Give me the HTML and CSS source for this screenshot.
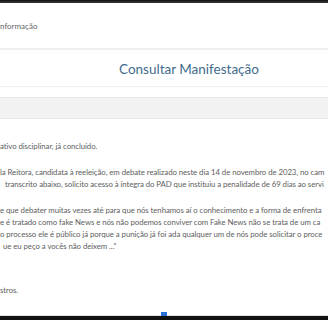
FILE: index.html
```html
<!DOCTYPE html>
<html>
    <head>
        <title>Consultar Manifestação</title>
        <meta charset="UTF-8">
        <link rel="stylesheet" href="styles.css">
    </head>
    <body>
        <div class="topbar"></div>
        <div class="header">
            <p class="brand">nformação</p>
        </div>
        <h1 class="title">Consultar Manifestação</h1>
        <div class="rule"></div>
        <div class="toolbar"></div>
        <div class="content">
            <p class="line">ativo disciplinar, já concluído.</p>
            <div class="para">
                <p class="line">la Reitora, candidata à reeleição, em debate realizado neste dia 14 de novembro de 2023, no cam</p>
                <p class="line in-5">transcrito abaixo, solicito acesso à íntegra do PAD que instituiu a penalidade de 69 dias ao servi</p>
            </div>
            <div class="para">
                <p class="line">e que debater muitas vezes até para que nós tenhamos aí o conhecimento e a forma de enfrenta</p>
                <p class="line">e é tratado como fake News e nós não podemos conviver com Fake News não se trata de um ca</p>
                <p class="line">o processo ele é público já porque a punição já foi ada qualquer um de nós pode solicitar o proce</p>
                <p class="line in-3">ue eu peço a vocês não deixem ..."</p>
            </div>
            <p class="line last">stros.</p>
        </div>
        <div class="footer">
            <span class="marker"></span>
        </div>
    </body>
</html>
```

FILE: styles.css
```css
html, body{
    margin: 0;
    padding: 0;
}

body{
    width: 328px;
    height: 320px;
    overflow: hidden;
    background: #fff;
    font-family: "Lato", "Open Sans", sans-serif;
    color: #555;
    display: flex;
    flex-direction: column;
}

.topbar{
    height: 3px;
    background: linear-gradient(#111, #3a3a3a);
}

.header{
    height: 45px;
    border-bottom: 2px solid #eeeeee;
    display: flex;
    align-items: center;
}

.brand{
    margin: 0;
    font-size: 8px;
    color: #666;
}

.title{
    margin: 9px 0 0 0;
    padding-left: 119px;
    font-size: 13.5px;
    font-weight: 400;
    color: #3f6b8c;
    line-height: 20px;
    white-space: nowrap;
}

.rule{
    margin-top: 7px;
    height: 1px;
    background: #f0f0f0;
}

.toolbar{
    margin-top: 10px;
    height: 20px;
    background: #f2f2f2;
    border-top: 1px solid #e8e8e8;
    border-bottom: 1px solid #e8e8e8;
}

.content{
    flex: 1;
    padding-top: 21px;
    font-size: 7.8px;
    letter-spacing: -0.06px;
    color: #606060;
}

.line{
    margin: 0;
    line-height: 12px;
    white-space: nowrap;
    overflow: hidden;
}

.para{
    margin-top: 14px;
}

.in-5{
    padding-left: 5px;
}

.in-3{
    padding-left: 3px;
}

.last{
    margin-top: 32px;
}

.footer{
    height: 4px;
    border-top: 1px solid #e3e3e3;
    background: #111;
    position: relative;
}

.marker{
    position: absolute;
    left: 161px;
    top: -4px;
    width: 6px;
    height: 4px;
    background: #2a6fd6;
}
```
